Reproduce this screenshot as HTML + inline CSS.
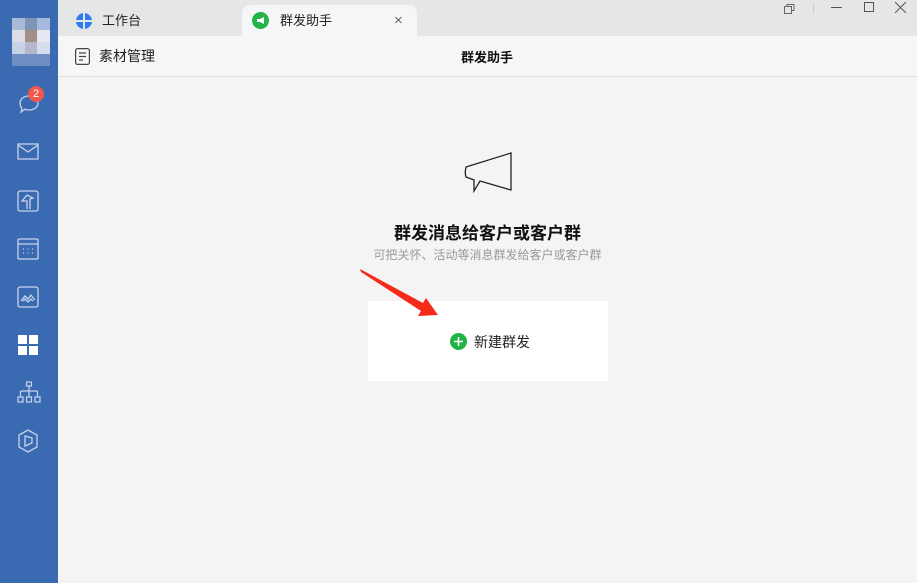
<!DOCTYPE html>
<html><head><meta charset="utf-8"><style>
*{margin:0;padding:0;box-sizing:border-box}
body{width:917px;height:583px;overflow:hidden;background:#f4f4f4;font-family:"Liberation Sans","Noto Sans CJK SC",sans-serif;position:relative}
.side{position:absolute;left:0;top:0;width:58px;height:583px;background:#3a6ab2}
.ic{position:absolute;left:17px}
.tabbar{position:absolute;left:58px;top:0;right:0;height:36px;background:#e5e6e8}
.tab{position:absolute;top:5px;height:31px;font-size:13px;color:#222;line-height:31px}
.hdr{position:absolute;left:58px;top:36px;right:0;height:41px;background:#f5f6f7;border-bottom:1px solid #e2e2e2}
.a{position:absolute}
</style></head><body>
<div class="side">
 <div class="a" style="left:12px;top:18px;width:38px;height:48px;background:#6f8fc4"></div>
 <div class="a" style="left:12px;top:18px;width:13px;height:12px;background:#a8bad8"></div>
 <div class="a" style="left:25px;top:18px;width:12px;height:12px;background:#7e95b8"></div>
 <div class="a" style="left:37px;top:18px;width:13px;height:12px;background:#a5bade"></div>
 <div class="a" style="left:12px;top:30px;width:13px;height:12px;background:#dcdde4"></div>
 <div class="a" style="left:25px;top:30px;width:12px;height:12px;background:#a09088"></div>
 <div class="a" style="left:37px;top:30px;width:13px;height:12px;background:#e6e9f2"></div>
 <div class="a" style="left:12px;top:42px;width:13px;height:12px;background:#c8d2e6"></div>
 <div class="a" style="left:25px;top:42px;width:12px;height:12px;background:#b5b8cc"></div>
 <div class="a" style="left:37px;top:42px;width:13px;height:12px;background:#d6deec"></div>
 <svg class="ic" style="top:92px" width="24" height="24" viewBox="0 0 24 24" fill="none" stroke="#c8d4ea" stroke-width="1.3"><path d="M12 4c5 0 9 3 9 7s-4 7-9 7c-1.5 0-3-.3-4-.8L4 20l1-3.5C3.8 15 3 13 3 11c0-4 4-7 9-7z"/></svg>
 <div class="a" style="left:28px;top:86px;width:16px;height:16px;border-radius:50%;background:#f0584a;color:#fff;font-size:11px;text-align:center;line-height:16px">2</div>
 <svg class="ic" style="top:143px" width="22" height="18" viewBox="0 0 22 18" fill="none" stroke="#c8d4ea" stroke-width="1.3"><rect x="1" y="1" width="20" height="15"/><path d="M1 2l10 7 10-7"/></svg>
 <svg class="ic" style="top:190px" width="22" height="22" viewBox="0 0 22 22" fill="none" stroke="#c8d4ea" stroke-width="1.3"><rect x="1" y="1" width="20" height="20" rx="2"/><path d="M10 19v-8H5l5-6 6 3-3 1v10"/></svg>
 <svg class="ic" style="top:238px" width="22" height="22" viewBox="0 0 22 22" fill="none" stroke="#c8d4ea" stroke-width="1.3"><rect x="1" y="1" width="20" height="20" rx="1"/><path d="M1 6h20"/><path d="M6 11h1M10.5 11h1M15 11h1M6 15h1M10.5 15h1M15 15h1"/></svg>
 <svg class="ic" style="top:286px" width="22" height="22" viewBox="0 0 22 22" fill="none" stroke="#c8d4ea" stroke-width="1.3"><rect x="1" y="1" width="20" height="20" rx="2"/><path d="M4 15l4-5 3 3 3-4 4 5M6 15l2-2 3 3 3-3 2 2"/></svg>
 <div class="a" style="left:18px;top:335px;width:9px;height:9px;background:#fff"></div>
 <div class="a" style="left:29px;top:335px;width:9px;height:9px;background:#fff"></div>
 <div class="a" style="left:18px;top:346px;width:9px;height:9px;background:#fff"></div>
 <div class="a" style="left:29px;top:346px;width:9px;height:9px;background:#fff"></div>
 <svg class="ic" style="top:381px" width="24" height="22" viewBox="0 0 24 22" fill="none" stroke="#c8d4ea" stroke-width="1.2"><rect x="9.5" y="1" width="5" height="4"/><path d="M12 5v5M3.5 10h17M3.5 10v6M12 10v6M20.5 10v6"/><rect x="1" y="16" width="5" height="5"/><rect x="9.5" y="16" width="5" height="5"/><rect x="18" y="16" width="5" height="5"/></svg>
 <svg class="ic" style="top:429px" width="22" height="24" viewBox="0 0 22 24" fill="none" stroke="#c8d4ea" stroke-width="1.3"><path d="M11 1l9 5v12l-9 5-9-5V6z"/><path d="M8 7v10l7-3V9z"/></svg>
</div>
<div class="tabbar">
 <div class="tab" style="left:10px;width:174px">
  <svg class="a" style="left:8px;top:8px" width="16" height="16" viewBox="0 0 16 16"><circle cx="8" cy="8" r="8" fill="#2f7bf0"/><path d="M8 0v16M0 8h16" stroke="#e5e6e8" stroke-width="2"/></svg>
  <span class="a" style="left:34px">工作台</span></div>
 <div class="tab" style="left:184px;width:175px;background:#f5f6f7;border-radius:8px 8px 0 0">
  <svg class="a" style="left:10px;top:7px" width="17" height="17" viewBox="0 0 17 17"><circle cx="8.5" cy="8.5" r="8.5" fill="#25b34a"/><path d="M5 7h3l4-2v7l-4-2H5z" fill="#fff"/></svg>
  <span class="a" style="left:38px">群发助手</span>
  <span class="a" style="left:152px;color:#666;font-size:15px">×</span></div>
 <svg class="a" style="left:725px;top:3px" width="12" height="12" viewBox="0 0 12 12" fill="none" stroke="#666"><rect x="1.5" y="3.5" width="7" height="7"/><path d="M4 3.5V1.5h7v6H8.5"/></svg>
 <div class="a" style="left:755px;top:4px;width:1px;height:10px;background:#ccc"></div>
 <div class="a" style="left:773px;top:7px;width:11px;height:1px;background:#555"></div>
 <div class="a" style="left:806px;top:2px;width:10px;height:10px;border:1px solid #555"></div>
 <svg class="a" style="left:837px;top:2px" width="11" height="11" viewBox="0 0 11 11" stroke="#555"><path d="M0 0l11 11M11 0L0 11"/></svg>
</div>
<div class="hdr">
 <svg class="a" style="left:17px;top:12px" width="15" height="17" viewBox="0 0 15 17" fill="none" stroke="#444" stroke-width="1.2"><rect x=".6" y=".6" width="13.8" height="15.8" rx="2"/><path d="M4 5h7M4 8.5h7M4 12h4"/></svg>
 <span class="a" style="left:41px;top:10px;font-size:14px;color:#222">素材管理</span>
 <span class="a" style="left:403px;top:11px;font-size:13px;font-weight:bold;color:#111">群发助手</span>
</div>
<svg class="a" style="left:462px;top:151px" width="52" height="42" viewBox="0 0 52 42" fill="none" stroke="#222" stroke-width="1.3"><path d="M49 2v37L18 30l-6 10v-11l-8-3c-1-3-1-6 0-10z"/></svg>
<div class="a" style="left:0;width:917px;top:219px;text-align:center;padding-left:58px;font-size:17px;font-weight:bold;color:#111">群发消息给客户或客户群</div>
<div class="a" style="left:0;width:917px;top:246px;text-align:center;padding-left:58px;font-size:12px;color:#999">可把关怀、活动等消息群发给客户或客户群</div>
<div class="a" style="left:368px;top:301px;width:240px;height:80px;background:#fff"></div>
<svg class="a" style="left:450px;top:333px" width="17" height="17" viewBox="0 0 17 17"><circle cx="8.5" cy="8.5" r="8.5" fill="#1fb443"/><path d="M8.5 4v9M4 8.5h9" stroke="#fff" stroke-width="1.6"/></svg>
<span class="a" style="left:474px;top:332px;font-size:14px;color:#222">新建群发</span>
<svg class="a" style="left:355px;top:265px" width="90" height="55" viewBox="0 0 90 55"><path d="M5 4L68 38l3-5 12 17-20 1 3-5L6 7z" fill="#f52a1a"/></svg>
</body></html>
